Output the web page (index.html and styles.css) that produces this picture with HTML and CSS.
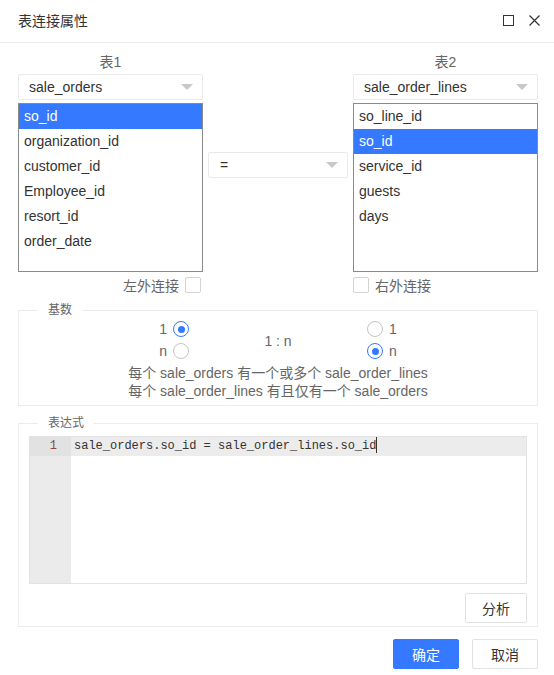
FILE: index.html
```html
<!DOCTYPE html>
<html lang="zh-CN">
<head>
<meta charset="utf-8">
<title>表连接属性</title>
<link rel="stylesheet" href="styles.css">
</head>
<body>
<div class="dialog">
  <div class="dialog-header">
    <span class="dialog-title">表连接属性</span>
    <div class="header-tools">
      <span class="tool-max"></span>
      <svg class="tool-close" width="11" height="11" viewBox="0 0 11 11"><path d="M0.5 0.5 L10.5 10.5 M10.5 0.5 L0.5 10.5" stroke="#333" stroke-width="1.2" fill="none"/></svg>
    </div>
  </div>

  <div class="dialog-body">
    <div class="join-grid">
      <div class="table-col">
        <div class="col-label">表1</div>
        <div class="select"><span>sale_orders</span><i class="caret"></i></div>
        <ul class="field-list">
          <li class="active">so_id</li>
          <li>organization_id</li>
          <li>customer_id</li>
          <li>Employee_id</li>
          <li>resort_id</li>
          <li>order_date</li>
        </ul>
        <label class="check-row right"><span>左外连接</span><i class="checkbox"></i></label>
      </div>

      <div class="op-col">
        <div class="select op"><span>=</span><i class="caret"></i></div>
      </div>

      <div class="table-col">
        <div class="col-label">表2</div>
        <div class="select"><span>sale_order_lines</span><i class="caret"></i></div>
        <ul class="field-list">
          <li>so_line_id</li>
          <li class="active">so_id</li>
          <li>service_id</li>
          <li>guests</li>
          <li>days</li>
        </ul>
        <label class="check-row"><i class="checkbox"></i><span>右外连接</span></label>
      </div>
    </div>

    <fieldset class="group cardinality">
      <legend>基数</legend>
      <div class="card-row">
        <div class="radio-set left">
          <label class="radio-item"><span>1</span><i class="radio checked"></i></label>
          <label class="radio-item"><span>n</span><i class="radio"></i></label>
        </div>
        <div class="ratio">1 : n</div>
        <div class="radio-set">
          <label class="radio-item"><i class="radio"></i><span>1</span></label>
          <label class="radio-item"><i class="radio checked"></i><span>n</span></label>
        </div>
      </div>
      <p class="desc">每个 sale_orders 有一个或多个 sale_order_lines</p>
      <p class="desc">每个 sale_order_lines 有且仅有一个 sale_orders</p>
    </fieldset>

    <fieldset class="group expression">
      <legend>表达式</legend>
      <div class="editor">
        <div class="gutter"><div class="line-no">1</div></div>
        <div class="code">
          <div class="code-line current">sale_orders.so_id = sale_order_lines.so_id<span class="cursor"></span></div>
        </div>
      </div>
      <div class="expr-actions">
        <button class="btn">分析</button>
      </div>
    </fieldset>

    <div class="dialog-footer">
      <button class="btn primary">确定</button>
      <button class="btn">取消</button>
    </div>
  </div>
</div>
</body>
</html>
```

FILE: styles.css
```css
* {
  box-sizing: border-box;
}

body {
  margin: 0;
  background: #fff;
  font-family: "Liberation Sans", Arial, "Noto Sans CJK SC", sans-serif;
  font-size: 14px;
  color: #333;
}

.dialog {
  width: 554px;
  height: 675px;
  background: #fff;
}

/* header */
.dialog-header {
  height: 43px;
  padding: 0 14px 0 18px;
  display: flex;
  align-items: center;
  justify-content: space-between;
  border-bottom: 1px solid #ebebeb;
}

.dialog-title {
  font-size: 14px;
  color: #333;
  margin-top: -2px;
}

.header-tools {
  display: flex;
  align-items: center;
  gap: 15px;
  margin-top: -2px;
}

.tool-max {
  width: 11px;
  height: 11px;
  border: 1.3px solid #333;
}

.tool-close {
  display: block;
}

/* body */
.dialog-body {
  padding: 0 16px 0 18px;
}

.join-grid {
  display: grid;
  grid-template-columns: 185px 140px 185px;
  column-gap: 5px;
  padding-top: 9px;
}

.table-col {
  display: flex;
  flex-direction: column;
}

.col-label {
  height: 22px;
  line-height: 20px;
  text-align: center;
  color: #666;
}

.select {
  height: 26px;
  border: 1px solid #eaeaea;
  border-radius: 2px;
  display: flex;
  align-items: center;
  justify-content: space-between;
  padding: 0 9px 0 10px;
  color: #333;
}

.select.op {
  margin-top: 100px;
}

.select.op span {
  padding-left: 1px;
}

.caret {
  width: 0;
  height: 0;
  border-left: 6px solid transparent;
  border-right: 6px solid transparent;
  border-top: 6px solid #c8c8c8;
}

.field-list {
  list-style: none;
  margin: 3px 0 0;
  padding: 0;
  height: 169px;
  border: 1px solid #8a8a8a;
}

.field-list li {
  height: 25px;
  line-height: 25px;
  padding-left: 5px;
  color: #333;
}

.field-list li.active {
  background: #3479ff;
  color: #fff;
}

.check-row {
  display: flex;
  align-items: center;
  gap: 6px;
  height: 16px;
  margin-top: 5px;
  color: #666;
}

.check-row.right {
  justify-content: flex-end;
  padding-right: 2px;
}

.checkbox {
  width: 16px;
  height: 16px;
  border: 1px solid #d4d4d4;
  border-radius: 2px;
  background: #fff;
}

/* fieldsets */
.group {
  margin: 0;
  border: 1px solid #ececec;
  padding: 0 10px;
  min-width: 0;
}

.group legend {
  margin-left: 9px;
  padding: 0 10px;
  font-size: 12px;
  line-height: 14px;
  color: #666;
}

.cardinality {
  margin-top: 10px;
  padding-bottom: 5px;
}

.card-row {
  display: flex;
  justify-content: center;
  align-items: center;
  margin-top: 4px;
}

.radio-set {
  width: 160px;
  display: flex;
  flex-direction: column;
  gap: 6px;
  align-items: flex-start;
}

.radio-set.left {
  align-items: flex-end;
}

.ratio {
  width: 178px;
  text-align: center;
  color: #666;
  margin-top: 1px;
}

.radio-item {
  display: flex;
  align-items: center;
  gap: 6px;
  height: 16px;
  color: #666;
}

.radio {
  width: 16px;
  height: 16px;
  border: 1px solid #c4c4c4;
  border-radius: 50%;
  position: relative;
  background: #fff;
}

.radio.checked {
  border-color: #3479ff;
}

.radio.checked::after {
  content: "";
  position: absolute;
  left: 3.5px;
  top: 3.5px;
  width: 7px;
  height: 7px;
  border-radius: 50%;
  background: #3479ff;
}

.desc {
  margin: 0;
  text-align: center;
  color: #666;
  line-height: 18px;
}

.cardinality .card-row + .desc {
  margin-top: 5px;
}

.expression {
  margin-top: 10px;
  padding-bottom: 3px;
}

.editor {
  margin-top: 6px;
  height: 148px;
  border: 1px solid #e2e2e2;
  display: flex;
  background: #fff;
}

.gutter {
  width: 41px;
  background: #ebebeb;
  flex: none;
}

.line-no {
  height: 19px;
  line-height: 19px;
  text-align: right;
  padding-right: 14px;
  background: #e2e2e2;
  font-family: "Liberation Mono", "Courier New", monospace;
  font-size: 12px;
  color: #8a4545;
}

.code {
  flex: 1;
}

.code-line {
  height: 19px;
  line-height: 19px;
  padding-left: 3px;
  font-family: "Liberation Mono", "Courier New", monospace;
  font-size: 12px;
  color: #333;
  white-space: pre;
}

.code-line.current {
  background: #ececec;
}

.cursor {
  display: inline-block;
  width: 1px;
  height: 16px;
  background: #333;
  vertical-align: -4px;
}

.expr-actions {
  display: flex;
  justify-content: flex-end;
  margin-top: 9px;
}

.btn {
  height: 30px;
  padding: 0 18px;
  border: 1px solid #e2e2e2;
  border-radius: 2px;
  background: #fff;
  color: #333;
  font-family: "Liberation Sans", Arial, "Noto Sans CJK SC", sans-serif;
  font-size: 14px;
  cursor: pointer;
}

.expr-actions .btn {
  width: 62px;
  padding: 0;
}

.dialog-footer {
  display: flex;
  justify-content: flex-end;
  gap: 13px;
  margin-top: 12px;
}

.dialog-footer .btn {
  width: 66px;
  padding: 0;
}

.btn.primary {
  background: #3479ff;
  border-color: #3479ff;
  color: #fff;
}
```
